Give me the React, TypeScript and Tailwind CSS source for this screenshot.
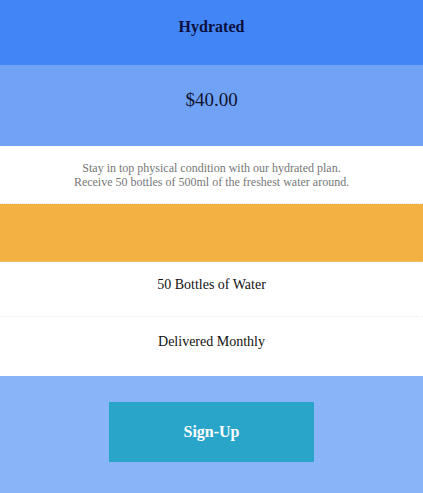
export default function App() {
  return (
    <div className="w-full min-h-screen bg-white text-center" style={{ fontFamily: '"Liberation Serif", "DejaVu Serif", serif' }}>
      {/* Plan header */}
      <div className="h-[65px] bg-[#4286f5] flex items-center justify-center pb-[11px]">
        <h3 className="text-[16px] font-bold text-[#0c0f3d]">Hydrated</h3>
      </div>
      <div className="h-[81px] bg-[#70a3f6] flex items-center justify-center pb-[10px]">
        <span className="text-[19px] text-[#10122e]">$40.00</span>
      </div>
      <div className="h-[58px] border-b border-dotted border-[#e2e2e2] flex flex-col items-center justify-center pt-[1px] text-[12px] leading-[14px] text-[#777]">
        <p>Stay in top physical condition with our hydrated plan.</p>
        <p>Receive 50 bottles of 500ml of the freshest water around.</p>
      </div>
      <div className="h-[58px] bg-[#f3b043] border-b border-dotted border-[#f7c77a]" />
      {/* Features */}
      <ul className="text-[14px] text-[#111]">
        <li className="h-[55px] border-b border-dotted border-[#ececec] flex items-center justify-center pb-[10px]">50 Bottles of Water</li>
        <li className="h-[59px] flex items-center justify-center pb-[10px]">Delivered Monthly</li>
      </ul>
      <div className="h-[117px] bg-[#89b4f7] flex justify-center pt-[26px]">
        <button className="w-[205px] h-[60px] bg-[#2aa5ca] text-white font-bold text-[16px]">Sign-Up</button>
      </div>
    </div>
  );
}
